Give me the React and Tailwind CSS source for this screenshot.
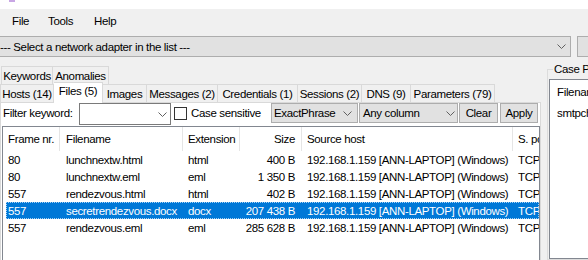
import React from "react";

function Chevron({ color = "#606060" }) {
  return (
    <svg width="9" height="5" viewBox="0 0 9 5" className="shrink-0">
      <polyline points="0.5,0.5 4.5,4.5 8.5,0.5" fill="none" stroke={color} strokeWidth="1" />
    </svg>
  );
}

const row2Tabs = [
  { label: "Hosts (14)", w: "w-[54px]", first: true },
  { label: "Files (5)", w: "w-[49px]", selected: true },
  { label: "Images", w: "w-[44px]" },
  { label: "Messages (2)", w: "w-[71px]" },
  { label: "Credentials (1)", w: "w-[80px]" },
  { label: "Sessions (2)", w: "w-[64px]" },
  { label: "DNS (9)", w: "w-[49px]" },
  { label: "Parameters (79)", w: "w-[84px]" },
];

const rows = [
  ["80", "lunchnextw.html", "html", "400 B"],
  ["80", "lunchnextw.eml", "eml", "1 350 B"],
  ["557", "rendezvous.html", "html", "402 B"],
  ["557", "secretrendezvous.docx", "docx", "207 438 B", true],
  ["557", "rendezvous.eml", "eml", "285 628 B"],
];

export default function App() {
  return (
    <div className="w-[588px] h-[260px] overflow-hidden bg-[#f0f0f0] font-['Liberation_Sans',Arial,sans-serif] text-[11.5px] leading-[14px] text-black tracking-[-0.35px]">
      {/* title strip */}
      <div className="h-[9px] bg-white">
        <div className="ml-[9px] w-[6px] h-[2px] bg-[#c8a6e4]" />
      </div>
      {/* menu */}
      <div className="h-[24px] flex items-center">
        <span className="ml-[12px] w-[36px]">File</span>
        <span className="w-[46px]">Tools</span>
        <span>Help</span>
      </div>
      {/* adapter combo */}
      <div className="mt-[3px] h-[21px] flex">
        <div className="w-[571px] h-full shrink-0 bg-[#e1e1e1] border border-l-0 border-[#adadad] flex items-center justify-between pr-[4px]">
          <span className="whitespace-nowrap">--- Select a network adapter in the list ---</span>
          <Chevron />
        </div>
        <div className="ml-[6px] w-[30px] h-full shrink-0 bg-[#e1e1e1] border border-[#adadad]" />
      </div>

      {/* main area */}
      <div className="flex h-[203px]">
        {/* left: tab control */}
        <div className="w-[541px] shrink-0 pt-[9px] flex flex-col">
          {/* tab row 1 */}
          <div className="flex h-[18px] ml-[1px]">
            <div className="w-[52px] h-full border-l border-t border-r border-[#d9d9d9] flex items-center justify-center">
              Keywords
            </div>
            <div className="w-[56px] h-full border-t border-r border-[#d9d9d9] flex items-center justify-center">
              Anomalies
            </div>
          </div>
          {/* tab row 2 */}
          <div className="flex items-end h-[20px] -mt-[2px] relative z-10">
            {row2Tabs.map((t) =>
              t.selected ? (
                <div
                  key={t.label}
                  className={`${t.w} h-[21px] -mb-[1px] bg-white border-t border-r border-[#d9d9d9] flex justify-center pt-[1px] shrink-0`}
                >
                  {t.label}
                </div>
              ) : (
                <div
                  key={t.label}
                  className={`${t.w} h-[18px] bg-[#f0f0f0] border-t border-r ${t.first ? "border-l" : ""} border-[#d9d9d9] flex items-center justify-center whitespace-nowrap shrink-0`}
                >
                  {t.label}
                </div>
              )
            )}
          </div>
          {/* tab page */}
          <div className="w-[541px] flex-1 bg-white border border-b-0 border-[#d9d9d9] flex flex-col">
            {/* filter row */}
            <div className="flex items-start h-[23px] shrink-0">
              <span className="ml-[2px] w-[76px] mt-[3px] whitespace-nowrap">Filter keyword:</span>
              <div className="w-[92px] h-[22px] bg-white border border-[#7a7a7a] flex items-center justify-end pr-[3px]">
                <Chevron />
              </div>
              <div className="ml-[3px] mt-[4px] w-[13px] h-[13px] border border-[#333333] bg-white" />
              <span className="ml-[4px] w-[80px] mt-[3px] whitespace-nowrap">Case sensitive</span>
              <div className="w-[87px] h-[20px] bg-[#e1e1e1] border border-[#adadad] flex items-center justify-between pl-[2px] pr-[5px]">
                <span>ExactPhrase</span>
                <Chevron />
              </div>
              <div className="ml-[1px] w-[99px] h-[20px] bg-[#e1e1e1] border border-[#adadad] flex items-center justify-between pl-[3px] pr-[2px]">
                <span>Any column</span>
                <Chevron />
              </div>
              <div className="ml-[1px] w-[39px] h-[20px] bg-[#e1e1e1] border border-[#adadad] flex items-center justify-center">
                Clear
              </div>
              <div className="ml-[2px] w-[38px] h-[20px] bg-[#e1e1e1] border border-[#adadad] flex items-center justify-center">
                Apply
              </div>
            </div>
            {/* table */}
            <div className="ml-[1px] w-[538px] flex-1 border border-b-0 border-[#828790] bg-white overflow-hidden">
              <div className="flex h-[24px] whitespace-nowrap">
                <div className="w-[57px] shrink-0 border-r border-[#e5e5e5] flex items-center pl-[5px]">Frame nr.</div>
                <div className="w-[123px] shrink-0 border-r border-[#e5e5e5] flex items-center pl-[6px]">Filename</div>
                <div className="w-[57px] shrink-0 border-r border-[#e5e5e5] flex items-center pl-[5px]">Extension</div>
                <div className="w-[62px] shrink-0 border-r border-[#e5e5e5] flex items-center justify-end pr-[6px]">Size</div>
                <div className="w-[211px] shrink-0 border-r border-[#e5e5e5] flex items-center pl-[5px]">Source host</div>
                <div className="flex-1 min-w-0 overflow-hidden flex items-center pl-[5px]">S. port</div>
              </div>
              {rows.map((r, i) => {
                const sel = r[4];
                return (
                  <div
                    key={i}
                    className={`ml-[3px] h-[17px] flex items-center whitespace-nowrap ${
                      sel
                        ? "bg-[#0078d7] text-white outline-1 outline-dotted outline-[#a8d2f4] -outline-offset-1"
                        : ""
                    }`}
                  >
                    <div className="w-[54px] shrink-0 pl-[2px]">{r[0]}</div>
                    <div className="w-[123px] shrink-0 pl-[6px]">{r[1]}</div>
                    <div className="w-[57px] shrink-0 pl-[5px]">{r[2]}</div>
                    <div className="w-[62px] shrink-0 pr-[7px] text-right">{r[3]}</div>
                    <div className="w-[211px] shrink-0 pl-[5px]">192.168.1.159 [ANN-LAPTOP] (Windows)</div>
                    <div className="flex-1 min-w-0 overflow-hidden pl-[5px]">TCP</div>
                  </div>
                );
              })}
            </div>
          </div>
        </div>

        {/* splitter */}
        <div className="w-[6px] shrink-0" />

        {/* right: case panel */}
        <fieldset className="mt-[5px] w-[80px] shrink-0 min-w-0 border border-[#dcdcdc] flex flex-col">
          <legend className="ml-[5px] px-[1px] leading-[14px] whitespace-nowrap">Case Panel</legend>
          <div className="ml-[1px] mt-[3px] h-[200px] bg-white border border-[#828790] pl-[7px] pt-[5px] whitespace-nowrap">
            <div>Filename</div>
            <div className="mt-[7px]">smtpchannel.pcap</div>
          </div>
        </fieldset>
      </div>
    </div>
  );
}
